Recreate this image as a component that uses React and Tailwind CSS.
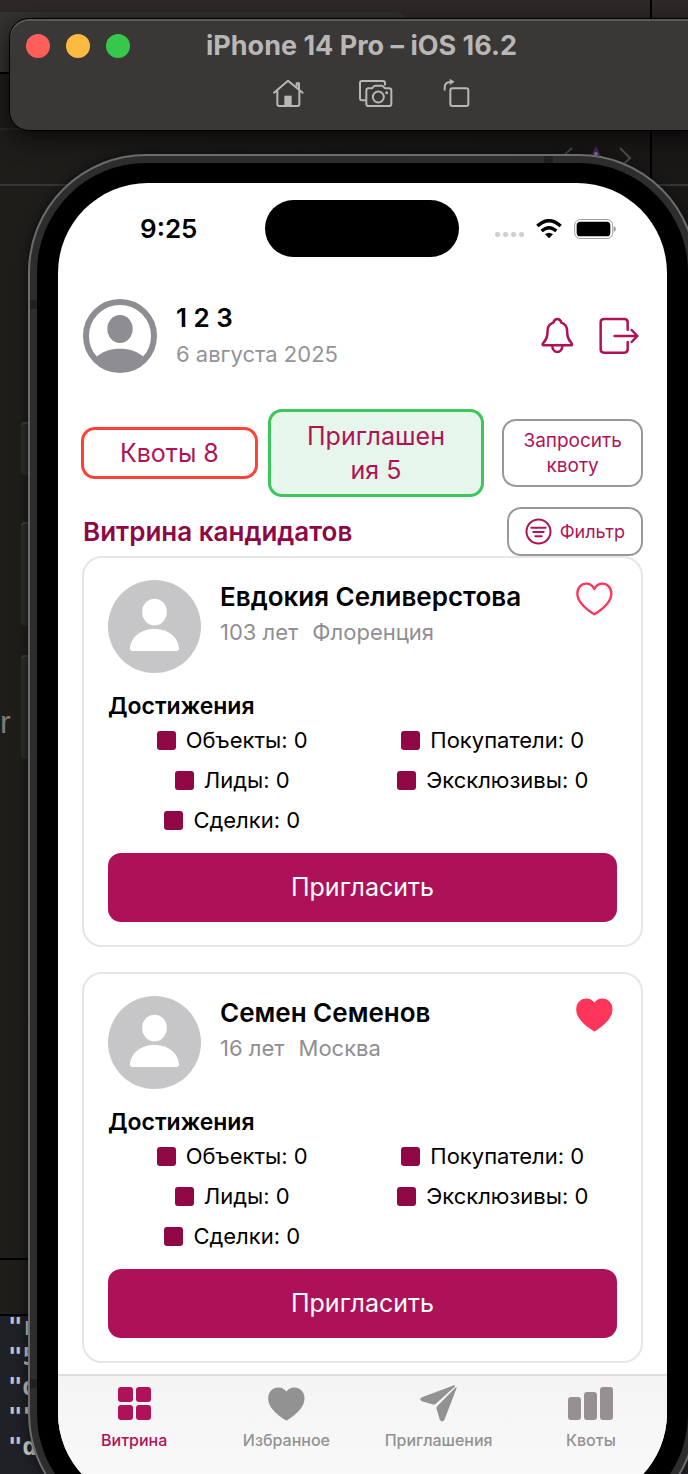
import React from "react";

const HEART =
  "M55 97C25 78 4 58 4 35C4 17 16 5 31 5C42 5 50 11 55 21C60 11 68 5 79 5C94 5 106 17 106 35C106 58 85 78 55 97Z";

function Heart({ filled, className }) {
  return (
    <svg
      viewBox="0 0 111 102"
      className={className}
      fill={filled ? "currentColor" : "none"}
      stroke="currentColor"
      strokeWidth="7"
      strokeLinejoin="round"
      aria-hidden="true"
    >
      <path d={HEART} />
    </svg>
  );
}

function HomeIcon() {
  return (
    <svg viewBox="0 0 108 90" className="h-[30px] w-9" fill="none" stroke="currentColor" strokeWidth="6" strokeLinecap="round" strokeLinejoin="round">
      <path d="M6 44L48 8L92 44M16 38V78Q16 84 22 84H76Q82 84 82 78V38M74 24V16H81V32" />
      <path d="M37 53H59V84H37Z" fill="currentColor" stroke="none" />
    </svg>
  );
}

function CameraIcon() {
  return (
    <svg viewBox="0 0 105 90" className="h-[30px] w-[35px]" fill="none" stroke="currentColor" strokeWidth="6" strokeLinecap="round" strokeLinejoin="round">
      <path d="M23 67H12Q6 67 6 61V15Q6 9 12 9H75Q81 9 81 15V20" />
      <path d="M32 31H40Q43 31 45 28Q48 23 52 23H71Q75 23 78 28Q80 31 83 31H93Q100 31 100 38V77Q100 84 93 84H32Q25 84 25 77V38Q25 31 32 31Z" />
      <circle cx="61" cy="57" r="16.500" />
      <circle cx="86" cy="44" r="4.500" fill="currentColor" stroke="none" />
    </svg>
  );
}

function RotateIcon() {
  return (
    <svg viewBox="0 0 84 90" className="h-[30px] w-7" fill="none" stroke="currentColor" strokeWidth="6" strokeLinecap="round" strokeLinejoin="round">
      <rect x="22" y="31" width="54" height="53" rx="6" />
      <path d="M5 35V30C5 17 12 12 22 12" />
      <path d="M20 2L35 11L20 21Z" fill="currentColor" stroke="none" />
    </svg>
  );
}

function BellIcon() {
  return (
    <svg viewBox="0 0 99 114" className="h-[38px] w-[33px]" fill="none" stroke="currentColor" strokeWidth="7.500" strokeLinejoin="round" strokeLinecap="round">
      <path d="M8 85H90Q95 85 92 79C84 70 80 66 79 52L78 38C77 27 70 20 61 17C59 9 55 6 49 6C43 6 39 9 37 17C28 20 21 27 20 38L19 52C18 66 14 70 6 79Q3 85 8 85Z" />
      <path d="M34 87A15 18 0 0 0 64 87" />
    </svg>
  );
}

function ExitIcon() {
  return (
    <svg viewBox="0 0 120 114" className="h-[38px] w-10" fill="none" stroke="currentColor" strokeWidth="7.500" strokeLinejoin="round" strokeLinecap="round">
      <path d="M86 38V16Q86 6 76 6H15Q5 6 5 16V97Q5 107 15 107H76Q86 107 86 97V75M47 57H115M98 39L115 57L98 75" />
    </svg>
  );
}

function ProfileIcon() {
  return (
    <svg viewBox="0 0 222 222" className="size-[74px] shrink-0 text-[#8e8d93]" aria-hidden="true">
      <circle cx="111" cy="111" r="102" fill="none" stroke="currentColor" strokeWidth="18" />
      <ellipse cx="111" cy="90" rx="38" ry="42" fill="currentColor" />
      <path d="M36 177C58 156 84 149 111 149S164 156 186 177A102 102 0 0 1 36 177Z" fill="currentColor" />
    </svg>
  );
}

function CandidateAvatar() {
  return (
    <svg viewBox="0 0 279 279" className="size-[93px] shrink-0" aria-hidden="true">
      <circle cx="139.500" cy="139.500" r="139.500" fill="#c6c6c8" />
      <ellipse cx="139.500" cy="96" rx="37" ry="40" fill="#fff" />
      <path d="M73 213Q65 213 66 204C69 170 100 147 139.500 147S210 170 213 204Q214 213 206 213Z" fill="#fff" />
    </svg>
  );
}

function FilterIcon() {
  return (
    <svg viewBox="0 0 81 81" className="size-[27px]" fill="none" stroke="currentColor" strokeWidth="6" strokeLinecap="round" aria-hidden="true">
      <circle cx="40.500" cy="40.500" r="36" />
      <path d="M19 29H62M25 42H56M31 55H50" />
    </svg>
  );
}

function WifiIcon() {
  return (
    <svg viewBox="0 0 78 60" className="h-5 w-[26px]" fill="none" stroke="#000" strokeWidth="10" aria-hidden="true">
      <path d="M4 21Q39 -11 74 21M17 36Q39 16 61 36" />
      <path d="M27 46Q39 36 51 46L39 58Z" fill="#000" stroke="none" />
    </svg>
  );
}

function BatteryIcon() {
  return (
    <svg viewBox="0 0 126 60" className="h-5 w-[42px]" aria-hidden="true">
      <rect x="2" y="1.500" width="114" height="57" rx="17" fill="none" stroke="#a0a0a0" strokeWidth="3" />
      <rect x="8" y="8" width="101" height="44" rx="11" fill="#000" />
      <path d="M119 21Q126 24 126 30T119 39Z" fill="#a0a0a0" />
    </svg>
  );
}

function GridIcon() {
  return (
    <svg viewBox="0 0 33 33" className="size-[33px]" fill="currentColor" aria-hidden="true">
      <rect width="15" height="15" rx="3" />
      <rect x="18" width="15" height="15" rx="3" />
      <rect y="18" width="15" height="15" rx="3" />
      <rect x="18" y="18" width="15" height="15" rx="3" />
    </svg>
  );
}

function PlaneIcon() {
  return (
    <svg viewBox="0 0 112 112" className="size-[37px]" fill="currentColor" aria-hidden="true">
      <path d="M103 1L6 37Q-5 43 6 49L40 59Q45 60 48 57L104 6Q108 2 103 1Z" />
      <path d="M111 9L74 105Q67 116 60 105L50 72Q49 67 52 64L106 9Q111 4 111 9Z" />
    </svg>
  );
}

function BarsIcon() {
  return (
    <svg viewBox="0 0 45 33" className="h-[33px] w-[45px]" fill="currentColor" aria-hidden="true">
      <rect y="10" width="13" height="23" rx="3" />
      <rect x="16" y="5" width="13" height="28" rx="3" />
      <rect x="32" width="13" height="33" rx="3" />
    </svg>
  );
}

function DesktopBackdrop() {
  return (
    <div className="absolute inset-0 overflow-hidden bg-linear-to-r from-[#1f1d1a] to-[#1a1817]" aria-hidden="true">
      <div className="flex h-full flex-col">
        <div className="flex h-[74px] flex-col border-b-2 border-black bg-[#2d2928]">
          <div className="mt-3 mr-[283px] grow rounded-tr-lg bg-[#363331]" />
        </div>
        <div className="h-14 border-b-2 border-[#2b2927]" />
        <div className="h-14 border-b-2 border-[#383635]" />
        <div className="flex grow flex-col justify-center font-['Liberation_Sans'] text-[32px] leading-10 text-[#7d7b79]">
          r
        </div>
        <div className="h-[58px] border-y-2 border-black" />
        <div className="h-[158px] bg-[#202127] pl-2 font-['DejaVu_Sans_Mono'] text-2xl font-bold text-[#c4c4c6]">
          <div className="-mt-1 leading-[30px]">
            <p>"r</p>
            <p>"5</p>
            <p>"d</p>
            <p>""</p>
            <p>"d</p>
          </div>
        </div>
      </div>
      <div className="absolute top-0 right-9 h-[280px] w-0.5 bg-black" />
      <svg viewBox="0 0 76 24" className="absolute top-[145px] left-[560px] h-6 w-[76px]" fill="none" stroke="#555250" strokeWidth="2">
        <path d="M12 3L2 12L12 21M60 3L70 13L60 23" />
        <path d="M36 1L44 16H28Z" fill="#4b2a6b" stroke="none" />
        <circle cx="36" cy="9" r="2" fill="#9a8fa5" stroke="none" />
      </svg>
    </div>
  );
}

function SimulatorBar() {
  return (
    <header className="relative -mr-[26px] ml-[9px] h-[113px] rounded-[20px] border border-black bg-[#3a3836] text-[#b9b7b5] shadow-[inset_0_2px_0_#5b5957,0_6px_24px_rgba(0,0,0,0.7)]">
      <div className="grid h-[54px] grid-cols-[1fr_auto_1fr] items-center px-4">
        <div className="flex gap-4">
          <button aria-label="Close" className="size-6 rounded-full bg-[#ff5f5b]" />
          <button aria-label="Minimize" className="size-6 rounded-full bg-[#fdba40]" />
          <button aria-label="Zoom" className="size-6 rounded-full bg-[#35c84a]" />
        </div>
        <h1 className="text-[27px] font-bold leading-8">iPhone 14 Pro – iOS 16.2</h1>
      </div>
      <div className="flex justify-center gap-[50px] pt-[5px] pl-5">
        <button aria-label="Home"><HomeIcon /></button>
        <button aria-label="Screenshot"><CameraIcon /></button>
        <button aria-label="Rotate"><RotateIcon /></button>
      </div>
    </header>
  );
}

function StatusBar() {
  return (
    <div className="grid grid-cols-[1fr_194px_1fr] items-center pt-[17px] pr-[51px] pl-[50px]">
      <span className="pl-8 text-[26px] font-semibold leading-8">9:25</span>
      <div className="h-[57px] rounded-full bg-black" />
      <div className="flex items-center justify-end gap-3">
        <div className="flex gap-[3px] pt-3">
          {[0, 1, 2, 3].map((i) => (
            <span key={i} className="size-[5px] rounded-[2px] bg-[#cfcfcf]" />
          ))}
        </div>
        <WifiIcon />
        <BatteryIcon />
      </div>
    </div>
  );
}

function ProfileHeader() {
  return (
    <div className="flex items-center pt-[42px] pr-1 pl-px">
      <ProfileIcon />
      <div className="grow pl-[19px]">
        <p className="text-[26px] font-semibold leading-9">1 2 3</p>
        <p className="text-[22px] leading-9 text-[#949398]">6 августа 2025</p>
      </div>
      <div className="flex gap-[25px] text-[#b01257]">
        <button aria-label="Уведомления"><BellIcon /></button>
        <button aria-label="Выйти"><ExitIcon /></button>
      </div>
    </div>
  );
}

function Summary() {
  return (
    <div className="mt-9 flex items-center gap-2.5 text-[#b01257]">
      <button className="-ml-px flex-[176_1_0%] rounded-[14px] border-[3px] border-[#ff4239] py-[7px] text-[25px] leading-8">
        Квоты 8
      </button>
      <button className="flex-[217_1_0%] rounded-[14px] border-[3px] border-[#3cc65b] bg-[#e7f6ea] py-[7px] text-[25px] leading-[34px]">
        Приглашен
        <br />
        ия 5
      </button>
      <button className="ml-2 flex-[141_1_0%] rounded-[14px] border-2 border-[#98979c] py-[7px] text-[19px] leading-[25px]">
        Запросить
        <br />
        квоту
      </button>
    </div>
  );
}

const STATS = ["Объекты", "Покупатели", "Лиды", "Эксклюзивы", "Сделки"];

function CandidateCard({ name, age, city, liked }) {
  return (
    <article className="rounded-[20px] border-2 border-[#e6e6e7] px-6 pt-[22px] pb-[23px]">
      <div className="flex items-start">
        <CandidateAvatar />
        <div className="grow pl-[19px]">
          <h3 className="text-[26px] font-semibold leading-[34px]">{name}</h3>
          <p className="flex gap-3.5 pt-0.5 text-[22px] leading-8 text-[#8f8e93]">
            <span>{age}</span>
            <span>{city}</span>
          </p>
        </div>
        <button aria-label="В избранное" aria-pressed={liked} className="mt-0.5 mr-1 text-[#ff3659]">
          <Heart filled={liked} className="h-[34px] w-[37px]" />
        </button>
      </div>
      <h4 className="mt-[18px] text-[23px] font-semibold leading-[30px]">Достижения</h4>
      <ul className="grid grid-cols-2 gap-x-3 gap-y-2.5 pt-1">
        {STATS.map((label) => (
          <li key={label} className="flex items-center justify-center gap-2.5 text-[22px] leading-[30px]">
            <span className="size-[19px] rounded-[3px] bg-[#8f0744]" />
            {label}: 0
          </li>
        ))}
      </ul>
      <button className="mt-[18px] h-[69px] w-full rounded-[13px] bg-[#ad1157] text-[25px] text-white">Пригласить</button>
    </article>
  );
}

function TabBar() {
  const tabs = [
    { label: "Витрина", icon: <GridIcon />, color: "text-[#b01257]" },
    { label: "Избранное", icon: <Heart filled className="h-[34px] w-[37px]" />, color: "text-[#929292]" },
    { label: "Приглашения", icon: <PlaneIcon />, color: "text-[#929292]" },
    { label: "Квоты", icon: <BarsIcon />, color: "text-[#979092]" },
  ];
  return (
    <nav className="mt-[11px] grid grow grid-cols-4 items-start border-t-2 border-[#dedede] bg-linear-to-b from-[#f4f4f4] to-[#fafafa] pt-2">
      {tabs.map(({ label, icon, color }) => (
        <a key={label} href="#" className={`flex flex-col items-center text-base leading-5 font-medium ${color}`}>
          <span className="flex h-[39px] items-center">{icon}</span>
          <span className="pt-[7px]">{label}</span>
        </a>
      ))}
    </nav>
  );
}

function Phone() {
  return (
    <div className="relative mt-[23px] -mr-[9px] ml-7">
      <div className="absolute top-[268px] -left-[7px] h-[53px] w-2 rounded-l bg-[#2b2b2b] shadow-[inset_0_2px_0_#3d3d3d]" />
      <div className="absolute top-[368px] -left-[7px] h-[104px] w-2 rounded-l bg-[#2b2b2b] shadow-[inset_0_2px_0_#3d3d3d]" />
      <div className="absolute top-[501px] -left-[7px] h-[104px] w-2 rounded-l bg-[#2b2b2b] shadow-[inset_0_2px_0_#3d3d3d]" />
      <div className="relative rounded-[118px] border-2 border-[#6c6c6c] bg-[#2d2d2d] p-[7px] shadow-[0_0_12px_rgba(0,0,0,0.6)]">
        <div className="rounded-[109px] bg-black p-5 pr-[21px] pl-[21px]">
          <main className="flex min-h-[1320px] flex-col overflow-hidden rounded-[90px] bg-white">
            <StatusBar />
            <div className="px-6">
              <ProfileHeader />
              <Summary />
              <div className="mt-2.5 flex items-center justify-between">
                <h2 className="pl-px text-[26px] font-semibold leading-8 text-[#8f0744]">Витрина кандидатов</h2>
                <button className="flex h-[49px] items-center gap-2 rounded-[14px] border-2 border-[#98979c] px-4 text-lg text-[#b01257]">
                  <FilterIcon />
                  Фильтр
                </button>
              </div>
              <div className="flex flex-col gap-[25px]">
                <CandidateCard name="Евдокия Селиверстова" age="103 лет" city="Флоренция" liked={false} />
                <CandidateCard name="Семен Семенов" age="16 лет" city="Москва" liked />
              </div>
            </div>
            <TabBar />
          </main>
        </div>
        <span className="absolute top-0 right-[142px] h-[7px] w-[9px] bg-[#202020]" />
        <span className="absolute top-36 left-0 h-[9px] w-[7px] bg-[#202020]" />
        <span className="absolute bottom-[142px] left-0 h-[9px] w-[7px] bg-[#202020]" />
      </div>
    </div>
  );
}

export default function App() {
  return (
    <div className="relative h-screen overflow-hidden pt-[18px] font-[Inter,sans-serif] text-black">
      <DesktopBackdrop />
      <SimulatorBar />
      <Phone />
    </div>
  );
}
